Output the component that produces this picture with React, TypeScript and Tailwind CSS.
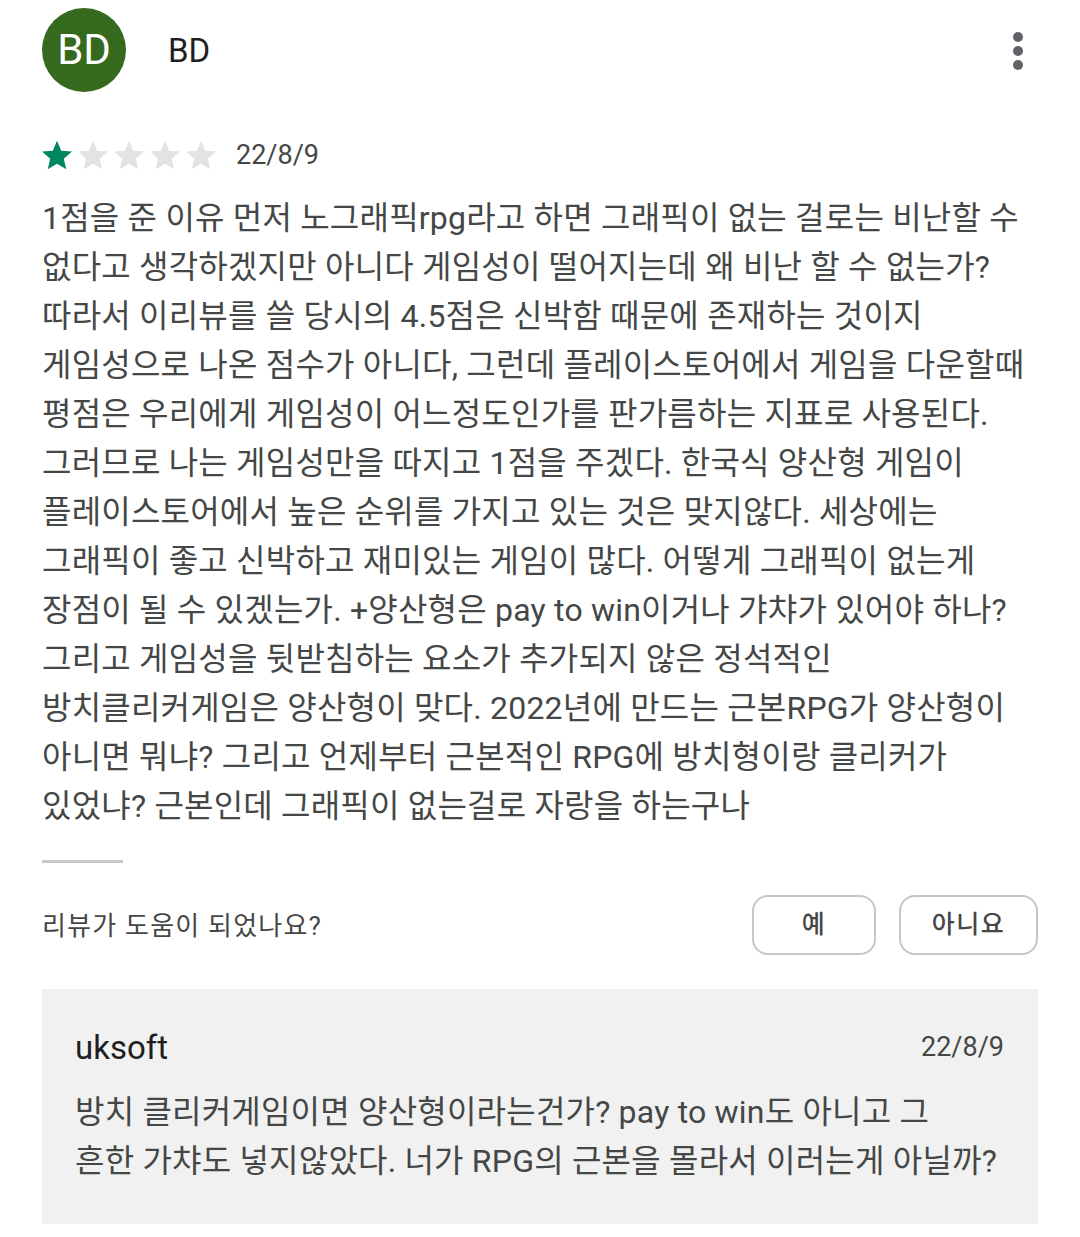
import React from "react";

const lines = [
  "1점을 준 이유 먼저 노그래픽rpg라고 하면 그래픽이 없는 걸로는 비난할 수",
  "없다고 생각하겠지만 아니다 게임성이 떨어지는데 왜 비난 할 수 없는가?",
  "따라서 이리뷰를 쓸 당시의 4.5점은 신박함 때문에 존재하는 것이지",
  "게임성으로 나온 점수가 아니다, 그런데 플레이스토어에서 게임을 다운할때",
  "평점은 우리에게 게임성이 어느정도인가를 판가름하는 지표로 사용된다.",
  "그러므로 나는 게임성만을 따지고 1점을 주겠다. 한국식 양산형 게임이",
  "플레이스토어에서 높은 순위를 가지고 있는 것은 맞지않다. 세상에는",
  "그래픽이 좋고 신박하고 재미있는 게임이 많다. 어떻게 그래픽이 없는게",
  "장점이 될 수 있겠는가. +양산형은 pay to win이거나 갸챠가 있어야 하나?",
  "그리고 게임성을 뒷받침하는 요소가 추가되지 않은 정석적인",
  "방치클리커게임은 양산형이 맞다. 2022년에 만드는 근본RPG가 양산형이",
  "아니면 뭐냐? 그리고 언제부터 근본적인 RPG에 방치형이랑 클리커가",
  "있었냐? 근본인데 그래픽이 없는걸로 자랑을 하는구나",
];

const replyLines = [
  "방치 클리커게임이면 양산형이라는건가? pay to win도 아니고 그",
  "흔한 가챠도 넣지않았다. 너가 RPG의 근본을 몰라서 이러는게 아닐까?",
];

function Star({ filled }: { filled: boolean }) {
  return (
    <svg width="30" height="30" viewBox="2 1.5 20 20" className="shrink-0">
      <path
        d="M12 17.27L18.18 21l-1.64-7.03L22 9.24l-7.19-.61L12 2 9.19 8.63 2 9.24l5.46 4.73L5.82 21z"
        fill={filled ? "#01875f" : "#e3e3e3"}
      />
    </svg>
  );
}

export default function App() {
  return (
    <div className="w-[1080px] h-[1237px] bg-white px-[42px] overflow-hidden font-[Roboto,'Noto_Sans_CJK_KR',sans-serif] text-[#444746]">
      {/* Header */}
      <div className="pt-[8px] flex items-center h-[92px]">
        <div className="w-[84px] h-[84px] rounded-full bg-[#34691e] flex items-center justify-center text-white text-[42px] leading-none">
          BD
        </div>
        <div className="ml-[42px] text-[33px] leading-none text-[#1f1f1f]">BD</div>
        <div className="ml-auto mr-[15px] mt-[2px] flex flex-col gap-[4px]">
          <div className="w-[10px] h-[10px] rounded-full bg-[#5f6368]" />
          <div className="w-[10px] h-[10px] rounded-full bg-[#5f6368]" />
          <div className="w-[10px] h-[10px] rounded-full bg-[#5f6368]" />
        </div>
      </div>

      {/* Stars */}
      <div className="mt-[48px] h-[30px] flex items-center">
        <div className="flex gap-[6px]">
          <Star filled />
          <Star filled={false} />
          <Star filled={false} />
          <Star filled={false} />
          <Star filled={false} />
        </div>
        <div className="ml-[20px] text-[27px] leading-none">22/8/9</div>
      </div>

      {/* Body */}
      <div className="mt-[24px] text-[32px] leading-[49px] tracking-[0.2px]">
        {lines.map((l, i) => (
          <div key={i} className="whitespace-nowrap">
            {l}
          </div>
        ))}
      </div>

      {/* Divider */}
      <div className="mt-[29px] w-[81px] h-[3px] bg-[#c8c8c8]" />

      {/* Helpful */}
      <div className="mt-[32px] h-[60px] flex items-center justify-between">
        <div className="text-[26px] tracking-[1.2px] mt-[3px]">리뷰가 도움이 되었나요?</div>
        <div className="flex gap-[23px]">
          <button className="w-[124px] h-[60px] border-2 border-[#c6c6c6] rounded-[16px] text-[25px] tracking-[1.5px] font-medium text-[#444746] flex items-center justify-center">
            예
          </button>
          <button className="w-[139px] h-[60px] border-2 border-[#c6c6c6] rounded-[16px] text-[25px] tracking-[1.5px] font-medium text-[#444746] flex items-center justify-center">
            아니요
          </button>
        </div>
      </div>

      {/* Reply */}
      <div className="mt-[34px] bg-[#f1f1f1] pl-[33px] pr-[34px] pt-[38px] pb-[38px]">
        <div className="h-[40px] flex items-center justify-between">
          <div className="text-[33px] leading-none text-[#1f1f1f]">uksoft</div>
          <div className="text-[27px] leading-none">22/8/9</div>
        </div>
        <div className="mt-[21px] text-[32px] leading-[49px] tracking-[0.2px]">
          {replyLines.map((l, i) => (
            <div key={i} className="whitespace-nowrap">
              {l}
            </div>
          ))}
        </div>
      </div>
    </div>
  );
}
